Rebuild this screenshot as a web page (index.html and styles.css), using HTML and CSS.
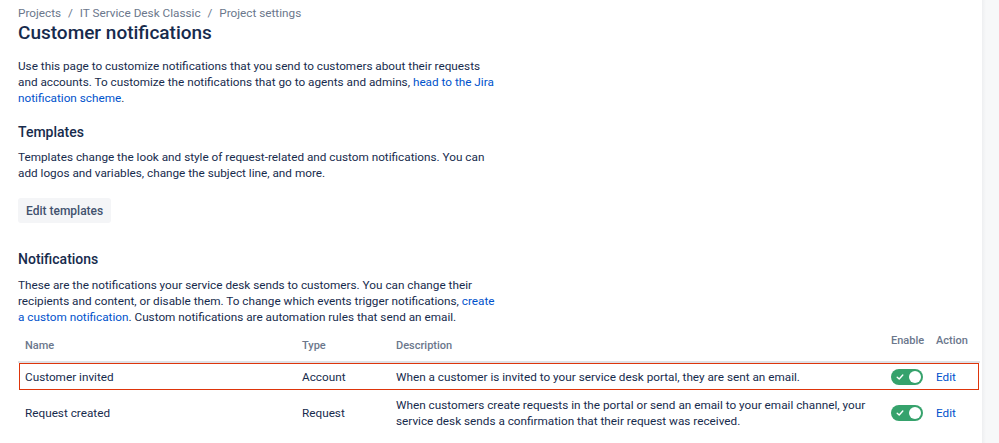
FILE: index.html
```html
<!DOCTYPE html>
<html lang="en">
<head>
  <meta charset="UTF-8" />
  <title>Customer notifications</title>
  <link rel="stylesheet" href="styles.css">
</head>
<body>
  <div class="page">
    <main class="content">
      <nav class="breadcrumbs">
        <a href="#">Projects</a>
        <span class="sep">/</span>
        <a href="#">IT Service Desk Classic</a>
        <span class="sep">/</span>
        <a href="#">Project settings</a>
      </nav>
      <h1>Customer notifications</h1>
      <p class="intro">Use this page to customize notifications that you send to customers about their requests and accounts. To customize the notifications that go to agents and admins, <a href="#">head to the Jira notification scheme</a>.</p>

      <h2>Templates</h2>
      <p class="intro">Templates change the look and style of request-related and custom notifications. You can add logos and variables, change the subject line, and more.</p>
      <button class="btn">Edit templates</button>

      <h2 class="notif-title">Notifications</h2>
      <p class="intro">These are the notifications your service desk sends to customers. You can change their recipients and content, or disable them. To change which events trigger notifications, <a href="#">create a custom notification</a>. Custom notifications are automation rules that send an email.</p>

      <table class="notif-table">
        <colgroup>
          <col class="col-name">
          <col class="col-type">
          <col class="col-desc">
          <col class="col-enable">
          <col class="col-action">
        </colgroup>
        <thead>
          <tr>
            <th>Name</th>
            <th>Type</th>
            <th>Description</th>
            <th class="top">Enable</th>
            <th class="top">Action</th>
          </tr>
        </thead>
        <tbody>
          <tr class="highlight">
            <td>Customer invited</td>
            <td>Account</td>
            <td>When a customer is invited to your service desk portal, they are sent an email.</td>
            <td><span class="toggle"><svg width="8" height="8" viewBox="0 0 8 8"><path d="M1.2 4.2 L3.2 6 L6.8 2" fill="none" stroke="#fff" stroke-width="1.4" stroke-linecap="round" stroke-linejoin="round"/></svg><span class="knob"></span></span></td>
            <td><a href="#">Edit</a></td>
          </tr>
          <tr>
            <td>Request created</td>
            <td>Request</td>
            <td>When customers create requests in the portal or send an email to your email channel, your service desk sends a confirmation that their request was received.</td>
            <td><span class="toggle"><svg width="8" height="8" viewBox="0 0 8 8"><path d="M1.2 4.2 L3.2 6 L6.8 2" fill="none" stroke="#fff" stroke-width="1.4" stroke-linecap="round" stroke-linejoin="round"/></svg><span class="knob"></span></span></td>
            <td><a href="#">Edit</a></td>
          </tr>
        </tbody>
      </table>
    </main>
    <aside class="side-edge"></aside>
  </div>
</body>
</html>
```

FILE: styles.css
```css
html, body {
  margin: 0;
  padding: 0;
  background: #fff;
}
body {
  font-family: Roboto, "Noto Sans", sans-serif;
  color: #172b4d;
  font-size: 11.75px;
  line-height: 16px;
}
a {
  color: #0052cc;
  text-decoration: none;
}
.page {
  display: flex;
  height: 443px;
  overflow: hidden;
}
.content {
  width: 982px;
  box-sizing: border-box;
  padding: 5px 0 0 18px;
}
.side-edge {
  flex: 1;
  background: linear-gradient(to right, #eeeff1, #f7f8f9 4px, #f7f8f9);
}
.breadcrumbs {
  color: #6b778c;
  line-height: 16px;
}
.breadcrumbs a {
  color: #6b778c;
}
.breadcrumbs .sep {
  padding: 0 4px;
}
h1 {
  font-size: 19px;
  font-weight: 500;
  line-height: 24px;
  margin: 0;
}
.intro {
  width: 480px;
  margin: 13px 0 0;
}
h2 {
  font-size: 14px;
  font-weight: 500;
  line-height: 18px;
  margin: 17px 0 0;
}
h2 + .intro {
  margin-top: 8px;
}
.btn {
  display: block;
  margin-top: 17px;
  height: 25px;
  padding: 0 8px;
  border: none;
  border-radius: 3px;
  background: #f4f5f7;
  color: #42526e;
  font-family: inherit;
  font-size: 12px;
  font-weight: 500;
}
.notif-title {
  margin-top: 27px;
}
.notif-title + .intro {
  margin-top: 9px;
}
.notif-table {
  width: 962px;
  table-layout: fixed;
  margin-top: 8px;
  border-collapse: collapse;
}
.col-name { width: 284px; }
.col-type { width: 94px; }
.col-desc { width: 495px; }
.col-enable { width: 45px; }
.col-action { width: 44px; }
.notif-table th {
  text-align: left;
  color: #6b778c;
  font-size: 11px;
  font-weight: 500;
  height: 21px;
  padding: 0 0 7px;
  border-bottom: 2px solid #dfe1e6;
  vertical-align: bottom;
}
.notif-table th.top {
  vertical-align: top;
}
.notif-table th:first-child,
.notif-table td:first-child {
  padding-left: 7px;
}
.notif-table td {
  padding: 6px 16px 6px 0;
  vertical-align: middle;
}
.notif-table td:first-child {
  padding-right: 0;
}
.notif-table tr.highlight {
  outline: 1.5px solid #de350b;
  outline-offset: -2px;
}
.toggle {
  display: flex;
  align-items: center;
  justify-content: space-between;
  width: 32px;
  height: 16px;
  padding: 0 2px 0 5px;
  box-sizing: border-box;
  background: #36a26c;
  border-radius: 8px;
}
.toggle svg {
  display: block;
}
.knob {
  width: 12px;
  height: 12px;
  border-radius: 50%;
  background: #fff;
}
```
